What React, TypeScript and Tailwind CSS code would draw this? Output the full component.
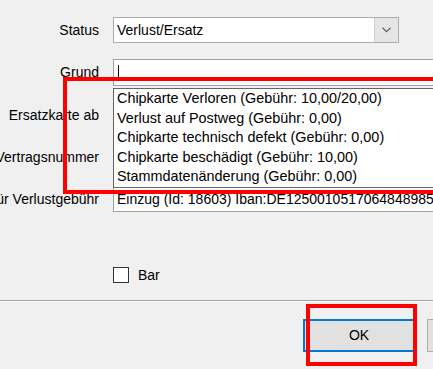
import React from "react";

const items = [
  "Chipkarte Verloren (Gebühr: 10,00/20,00)",
  "Verlust auf Postweg (Gebühr: 0,00)",
  "Chipkarte technisch defekt (Gebühr: 0,00)",
  "Chipkarte beschädigt (Gebühr: 10,00)",
  "Stammdatenänderung (Gebühr: 0,00)",
];

function Label({ text }: { text: string }) {
  return (
    <div className="w-[99px] shrink-0 flex justify-end whitespace-nowrap">
      <span>{text}</span>
    </div>
  );
}

export default function App() {
  return (
    <div className="relative w-[433px] h-[369px] overflow-hidden bg-[#f0f0f0] text-black text-[14px] font-['Liberation_Sans',Arial,sans-serif]">
      <div className="flex flex-col gap-[16px] pt-[17px]">
        <div className="flex items-center h-[26px]">
          <Label text="Status" />
          <div className="ml-[14px] w-[286px] h-[26px] border border-[#adadad] bg-white flex items-stretch">
            <div className="flex-1 flex items-center pl-[3px]">Verlust/Ersatz</div>
            <div className="w-[24px] bg-[#e5e5e5] border-l border-[#cccccc] flex items-center justify-center">
              <svg width="9" height="6" viewBox="0 0 9 6">
                <path d="M0.5 0.8 L4.5 4.6 L8.5 0.8" fill="none" stroke="#606060" strokeWidth="1.2" />
              </svg>
            </div>
          </div>
        </div>
        <div className="flex items-center h-[27px]">
          <Label text="Grund" />
          <div className="ml-[14px] w-[340px] shrink-0 h-[27px] border border-[#a0a0a0] bg-white flex items-center pl-[4px]">
            <div className="w-[1px] h-[15px] bg-black" />
          </div>
        </div>
        <div className="flex items-center h-[26px]">
          <Label text="Ersatzkarte ab" />
          <div className="ml-[14px] w-[340px] shrink-0 h-[26px] border border-[#a0a0a0] bg-white" />
        </div>
        <div className="flex items-center h-[26px]">
          <Label text="Vertragsnummer" />
          <div className="ml-[14px] w-[340px] shrink-0 h-[26px] border border-[#a0a0a0] bg-white" />
        </div>
        <div className="flex items-center h-[26px]">
          <Label text="Zahlungsart für Verlustgebühr" />
          <div className="ml-[14px] w-[340px] shrink-0 h-[26px] border border-[#a0a0a0] bg-white flex items-center pl-[3px] pt-[1px] whitespace-nowrap overflow-hidden">
            Einzug (Id: 18603) Iban:DE12500105170648489851
          </div>
        </div>
      </div>

      <div className="flex items-center mt-[55px] pl-[113px] h-[16px]">
        <div className="w-[16px] h-[16px] border border-[#333333] bg-white" />
        <span className="ml-[9px]">Bar</span>
      </div>

      <div className="mt-[17px] h-[1px] bg-[#a0a0a0]" />
      <div className="h-[1px] bg-[#fafafa]" />

      <div className="flex gap-[12px] pl-[303px] mt-[17px]">
        <div className="w-[112px] h-[33px] shrink-0 border-2 border-[#0078d7] bg-[#e1e1e1] flex items-center justify-center">
          OK
        </div>
        <div className="w-[112px] h-[33px] shrink-0 border border-[#adadad] bg-[#e1e1e1]" />
      </div>

      {/* Dropdown list overlay */}
      <div className="absolute left-[113px] top-[88px] w-[340px] h-[100px] border border-[#646464] bg-white text-[14.4px]">
        {items.map((t) => (
          <div key={t} className="h-[19.6px] flex items-center pl-[3px] whitespace-nowrap">
            {t}
          </div>
        ))}
      </div>

      {/* Red annotation rectangles */}
      <div className="absolute left-[63px] top-[77px] w-[400px] h-[117px] border-4 border-[#ff0000]" />
      <div className="absolute left-[306px] top-[304px] w-[111px] h-[62px] border-4 border-[#ff0000]" />
    </div>
  );
}
